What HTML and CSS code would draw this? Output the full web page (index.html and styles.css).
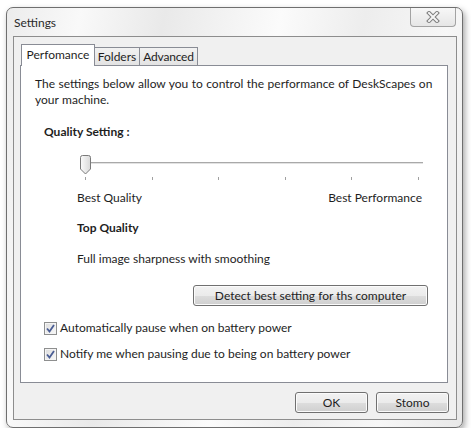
FILE: index.html
```html
<!DOCTYPE html>
<html lang="en">
  <head>
    <meta charset="UTF-8" />
    <title>Settings</title>
    <link rel="stylesheet" href="styles.css">
  </head>
  <body>
    <div class="window">
      <div class="titlebar">
        <span class="title">Settings</span>
        <div class="close-btn">
          <svg width="14" height="12" viewBox="0 0 14 12">
            <path d="M3 2 L11 10 M11 2 L3 10" stroke="#7d7d7d" stroke-width="4" stroke-linecap="square" fill="none" />
            <path d="M3 2 L11 10 M11 2 L3 10" stroke="#f4f4f4" stroke-width="2" stroke-linecap="square" fill="none" />
          </svg>
        </div>
      </div>

      <div class="client">
        <div class="tabs">
          <div class="tab active">Perfomance</div>
          <div class="tab tab-folders">Folders</div>
          <div class="tab tab-advanced">Advanced</div>
        </div>

        <div class="panel">
          <p class="intro">
            The settings below allow you to control the performance of DeskScapes on
            your machine.
          </p>

          <div class="heading">Quality Setting :</div>

          <div class="slider">
            <div class="track"></div>
            <svg class="thumb" width="11" height="20" viewBox="0 0 11 20">
              <defs>
                <linearGradient id="thumbFill" x1="0" y1="0" x2="1" y2="0">
                  <stop offset="0" stop-color="#fbfbfb" />
                  <stop offset="1" stop-color="#d9d9d9" />
                </linearGradient>
              </defs>
              <path d="M0.5 2.5 Q0.5 0.5 2.5 0.5 H8.5 Q10.5 0.5 10.5 2.5 V14 L5.5 19 L0.5 14 Z" fill="url(#thumbFill)" stroke="#7a7a7a" />
            </svg>
            <div class="ticks">
              <span></span><span></span><span></span><span></span><span></span><span></span>
            </div>
          </div>

          <div class="range-labels">
            <span>Best Quality</span>
            <span>Best Performance</span>
          </div>

          <div class="quality-name">Top Quality</div>
          <div class="quality-desc">Full image sharpness with smoothing</div>

          <div class="detect-row">
            <button class="btn detect-btn">Detect best setting for ths computer</button>
          </div>

          <label class="check first">
            <span class="box"><svg width="9" height="9" viewBox="0 0 9 9"><path d="M1 4.5 L3.5 7.5 L8 1" stroke="#4a5d94" stroke-width="1.8" fill="none" /></svg></span>
            Automatically pause when on battery power
          </label>
          <label class="check">
            <span class="box"><svg width="9" height="9" viewBox="0 0 9 9"><path d="M1 4.5 L3.5 7.5 L8 1" stroke="#4a5d94" stroke-width="1.8" fill="none" /></svg></span>
            Notify me when pausing due to being on battery power
          </label>
        </div>

        <div class="actions">
          <button class="btn dialog-btn">OK</button>
          <button class="btn dialog-btn">Stomo</button>
        </div>
      </div>
    </div>
  </body>
</html>
```

FILE: styles.css
```css
body {
  margin: 0;
  background: #ffffff;
  font-family: Lato, "Noto Sans", sans-serif;
  font-size: 12px;
  color: #1e1e1e;
}
.window {
  box-sizing: border-box;
  width: 457px;
  height: 421px;
  margin: 7px 0 0 6px;
  border: 1px solid #6f6f6f;
  border-radius: 7px;
  background: linear-gradient(100deg, #ececec 0%, #f9f9f9 14%, #e9e9e9 30%, #fbfbfb 52%, #ededed 68%, #f7f7f7 84%, #e8e8e8 100%);
  box-shadow: 2px 3px 6px rgba(0, 0, 0, 0.35);
  position: relative;
}
.titlebar {
  height: 28px;
  padding-left: 7px;
  display: flex;
  align-items: center;
}
.title {
  font-size: 12px;
  color: #2b2b2b;
  margin-top: 1px;
}
.close-btn {
  position: absolute;
  top: 0;
  right: 6px;
  box-sizing: border-box;
  width: 46px;
  height: 19px;
  border: 1px solid #a3a3a3;
  border-top: none;
  border-radius: 0 0 4px 4px;
  background: linear-gradient(#f7f7f7, #e6e6e6);
  display: flex;
  align-items: center;
  justify-content: center;
}
.client {
  box-sizing: border-box;
  height: 384px;
  margin: 0 5px 0 6px;
  border: 1px solid #8d8d8d;
  background: #f0f0f0;
  padding: 7px 8px 0 6px;
}
.tabs {
  display: flex;
  align-items: flex-end;
  height: 21px;
  padding-left: 1px;
}
.tab {
  box-sizing: border-box;
  height: 18px;
  border: 1px solid #898c95;
  border-bottom: none;
  border-left: none;
  background: linear-gradient(#f2f2f2, #e3e3e3);
  line-height: 17px;
  text-align: center;
  color: #1e1e1e;
}
.tab.active {
  width: 74px;
  height: 22px;
  margin-bottom: -1px;
  border-left: 1px solid #898c95;
  background: #ffffff;
  line-height: 19px;
  position: relative;
  z-index: 1;
}
.tab-folders {
  width: 45px;
}
.tab-advanced {
  width: 58px;
  letter-spacing: -0.2px;
}
.panel {
  box-sizing: border-box;
  height: 318px;
  border: 1px solid #898c95;
  background: #ffffff;
  padding-left: 14px;
}
.intro {
  margin: 10px 0 0;
  line-height: 16px;
  width: 410px;
  word-spacing: 0.4px;
}
.heading {
  margin: 16px 0 0 9px;
  line-height: 16px;
  font-weight: bold;
}
.slider {
  position: relative;
  width: 343px;
  height: 26px;
  margin: 15px 0 0 45px;
}
.track {
  position: absolute;
  top: 7px;
  left: 2px;
  right: 0;
  height: 1px;
  background: #a9a9a9;
  border-bottom: 1px solid #e2e2e2;
}
.thumb {
  position: absolute;
  top: 0;
  left: 0;
}
.ticks {
  display: flex;
  justify-content: space-between;
  padding: 22px 4px 0 5px;
}
.ticks span {
  width: 1px;
  height: 3px;
  background: #a0a0a0;
}
.range-labels {
  display: flex;
  justify-content: space-between;
  width: 345px;
  margin: 9px 0 0 42px;
  line-height: 16px;
}
.quality-name {
  margin: 14px 0 0 42px;
  line-height: 16px;
  font-weight: bold;
}
.quality-desc {
  margin: 15px 0 0 42px;
  line-height: 16px;
}
.detect-row {
  display: flex;
  justify-content: flex-end;
  margin: 18px 19px 0 0;
}
.btn {
  box-sizing: border-box;
  height: 21px;
  border: 1px solid #707070;
  border-radius: 3px;
  background: linear-gradient(#f2f2f2 0%, #ebebeb 50%, #dddddd 51%, #cfcfcf 100%);
  box-shadow: inset 0 0 0 1px #fbfbfb;
  font-family: inherit;
  font-size: 12px;
  color: #1e1e1e;
  padding: 0;
  line-height: 18px;
}
.detect-btn {
  width: 235px;
}
.check {
  display: flex;
  align-items: center;
  gap: 3px;
  margin: 10px 0 0 9px;
  line-height: 16px;
}
.check.first {
  margin-top: 14px;
}
.box {
  box-sizing: border-box;
  width: 13px;
  height: 13px;
  border: 1px solid #8e8f8f;
  background: linear-gradient(135deg, #dcdcdc, #f9f9f9);
  box-shadow: inset 0 0 0 1px #f4f4f4;
  display: flex;
  align-items: center;
  justify-content: center;
}
.actions {
  display: flex;
  justify-content: flex-end;
  gap: 8px;
  margin: 9px -1px 0 0;
}
.dialog-btn {
  width: 73px;
}
```
